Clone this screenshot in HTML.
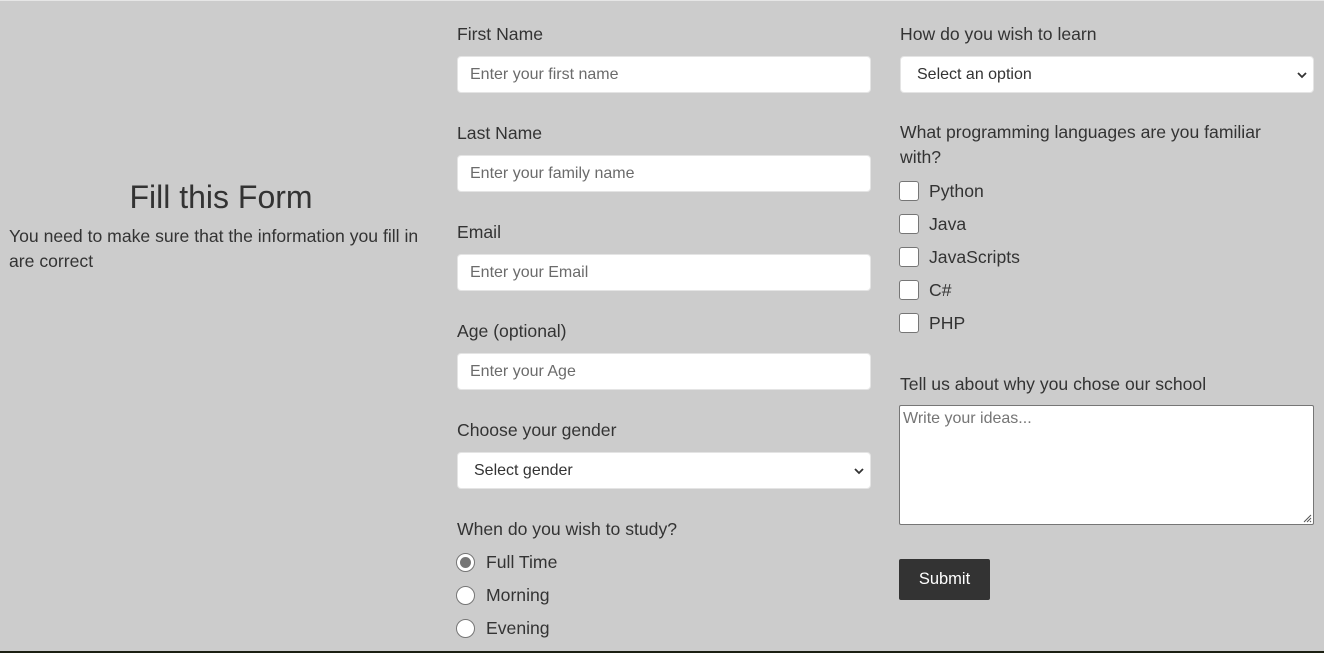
<!DOCTYPE html>
<html><head><style>
html,body{margin:0;padding:0;}
body{width:1324px;height:653px;background:#cccccc;position:relative;overflow:hidden;font-family:"Liberation Sans",Arial,sans-serif;color:#333;}
.a{position:absolute;}
.lbl{font-size:17.6px;line-height:20px;white-space:nowrap;}
.inp{position:absolute;background:#fff;border-radius:4px;height:37px;width:414px;box-sizing:border-box;border:1px solid #e4e4e4;font-size:16px;color:#6b6b6b;line-height:35px;padding-left:12px;}
.sel{color:#333;padding-left:16px;}
.sel svg{position:absolute;right:6px;top:14px;}
.cb{position:absolute;width:18px;height:18px;border:1px solid #767676;border-radius:3px;background:#fff;}
.rd{position:absolute;width:19px;height:19px;border:1px solid #767676;border-radius:50%;background:#fff;box-sizing:border-box;}
</style></head><body>
<div class="a" style="left:0;top:0;width:1324px;height:1px;background:#e6e6e6"></div>
<div class="a" style="left:0;top:651px;width:1324px;height:2px;background:#1b1f12"></div>

<div class="a" style="left:0;width:442px;top:178px;text-align:center;font-size:32px;line-height:38px">Fill this Form</div>
<div class="a" style="left:9px;top:224px;width:424px;font-size:17.6px;line-height:25px">You need to make sure that the information you fill in are correct</div>

<div class="a lbl" style="left:457px;top:24px">First Name</div>
<div class="inp" style="left:457px;top:56px">Enter your first name</div>
<div class="a lbl" style="left:457px;top:123px">Last Name</div>
<div class="inp" style="left:457px;top:155px">Enter your family name</div>
<div class="a lbl" style="left:457px;top:222px">Email</div>
<div class="inp" style="left:457px;top:254px">Enter your Email</div>
<div class="a lbl" style="left:457px;top:321px">Age (optional)</div>
<div class="inp" style="left:457px;top:353px">Enter your Age</div>
<div class="a lbl" style="left:457px;top:420px">Choose your gender</div>
<div class="inp sel" style="left:457px;top:452px">Select gender<svg width="10" height="8" viewBox="0 0 10 8"><path d="M1 2 L5 6 L9 2" stroke="#333" stroke-width="1.8" fill="none"/></svg></div>
<div class="a lbl" style="left:457px;top:519px">When do you wish to study?</div>
<div class="rd" style="left:456px;top:553px"><div style="position:absolute;left:3px;top:3px;width:11px;height:11px;border-radius:50%;background:#767676"></div></div>
<div class="a lbl" style="left:486px;top:552px">Full Time</div>
<div class="rd" style="left:456px;top:586px"></div>
<div class="a lbl" style="left:486px;top:585px">Morning</div>
<div class="rd" style="left:456px;top:619px"></div>
<div class="a lbl" style="left:486px;top:618px">Evening</div>

<div class="a lbl" style="left:900px;top:24px">How do you wish to learn</div>
<div class="inp sel" style="left:900px;top:56px">Select an option<svg width="10" height="8" viewBox="0 0 10 8"><path d="M1 2 L5 6 L9 2" stroke="#333" stroke-width="1.8" fill="none"/></svg></div>
<div class="a" style="left:900px;top:120px;width:380px;font-size:17.6px;line-height:25px">What programming languages are you familiar with?</div>
<div class="cb" style="left:899px;top:181px"></div><div class="a lbl" style="left:929px;top:181px">Python</div>
<div class="cb" style="left:899px;top:214px"></div><div class="a lbl" style="left:929px;top:214px">Java</div>
<div class="cb" style="left:899px;top:247px"></div><div class="a lbl" style="left:929px;top:247px">JavaScripts</div>
<div class="cb" style="left:899px;top:280px"></div><div class="a lbl" style="left:929px;top:280px">C#</div>
<div class="cb" style="left:899px;top:313px"></div><div class="a lbl" style="left:929px;top:313px">PHP</div>
<div class="a lbl" style="left:900px;top:374px">Tell us about why you chose our school</div>
<div class="a" style="left:899px;top:405px;width:415px;height:120px;background:#fff;border:1px solid #767676;border-radius:2px;font-size:16px;color:#757575;padding:3px 0 0 3px;box-sizing:border-box;line-height:20px">Write your ideas...
<svg class="a" style="right:1px;bottom:1px" width="10" height="10"><path d="M9 2 L2 9 M9 5 L5 9 M9 8 L8 9" stroke="#555" stroke-width="1"/></svg></div>
<div class="a" style="left:899px;top:559px;width:91px;height:41px;background:#333;border-radius:2px;color:#fff;font-size:16.5px;line-height:41px;text-align:center">Submit</div>
</body></html>
